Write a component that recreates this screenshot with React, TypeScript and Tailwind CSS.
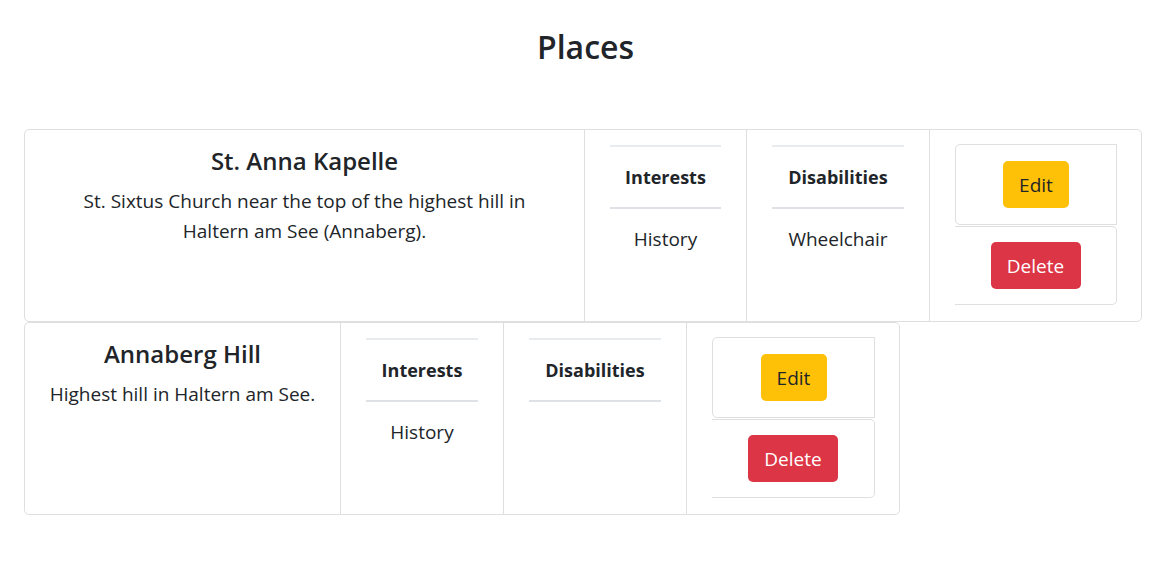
import React from "react";

type Place = {
  name: string;
  description: string;
  interests: string[];
  disabilities: string[];
  widths: [string, string, string, string];
};

const places: Place[] = [
  {
    name: "St. Anna Kapelle",
    description:
      "St. Sixtus Church near the top of the highest hill in Haltern am See (Annaberg).",
    interests: ["History"],
    disabilities: ["Wheelchair"],
    widths: ["w-[560px]", "w-[162px]", "w-[183px]", "w-[211px]"],
  },
  {
    name: "Annaberg Hill",
    description: "Highest hill in Haltern am See.",
    interests: ["History"],
    disabilities: [],
    widths: ["w-[316px]", "w-[163px]", "w-[183px]", "w-[212px]"],
  },
];

function ListTable({ title, items }: { title: string; items: string[] }) {
  return (
    <div className="border-t-2 border-[#e9ecef]">
      <div className="pt-[15px] pb-[15px] text-center text-[18px] font-bold leading-[30px] border-b-2 border-[#dee2e6]">
        {title}
      </div>
      {items.map((it) => (
        <div key={it} className="py-[15px] text-center text-[19px] leading-[30px]">
          {it}
        </div>
      ))}
    </div>
  );
}

function PlaceCard({ place }: { place: Place }) {
  const [w1, w2, w3, w4] = place.widths;
  return (
    <div className="flex border border-[#dfdfdf] rounded-[5px] bg-white">
      <div className={`${w1} shrink-0 border-r border-[#dfdfdf] px-[12px] pt-[16px] text-center`}>
        <h5 className="text-[24px] font-semibold leading-[30px] mb-[10px]">{place.name}</h5>
        <p className="text-[19px] leading-[30px] max-w-[470px] mx-auto">{place.description}</p>
      </div>
      <div className={`${w2} shrink-0 border-r border-[#dfdfdf] px-[25px] pt-[15px]`}>
        <ListTable title="Interests" items={place.interests} />
      </div>
      <div className={`${w3} shrink-0 border-r border-[#dfdfdf] px-[25px] pt-[15px]`}>
        <ListTable title="Disabilities" items={place.disabilities} />
      </div>
      <div className={`${w4} shrink-0 pl-[25px] pr-[24px] pt-[14px] pb-[16px] flex flex-col`}>
        <div className="border border-[#dfdfdf] rounded-l-[5px] py-[16px] flex justify-center">
          <button className="w-[66px] h-[47px] rounded-[5px] bg-[#ffc107] text-[#212529] text-[19px] leading-[28px]">
            Edit
          </button>
        </div>
        <div className="mt-px border-t border-r border-b border-[#dfdfdf] rounded-r-[5px] py-[15px] flex justify-center">
          <button className="w-[90px] h-[47px] rounded-[5px] bg-[#dc3545] text-white text-[19px] leading-[28px]">
            Delete
          </button>
        </div>
      </div>
    </div>
  );
}

export default function App() {
  return (
    <div className="min-h-[564px] w-full bg-white text-[#212529] font-['Open_Sans','Noto_Sans',sans-serif]">
      <h1 className="pt-[23px] text-center text-[32px] font-semibold leading-[48px]">Places</h1>
      <div className="ml-[24px] mt-[58px] flex flex-col items-start gap-0">
        {places.map((p) => (
          <PlaceCard key={p.name} place={p} />
        ))}
      </div>
    </div>
  );
}
